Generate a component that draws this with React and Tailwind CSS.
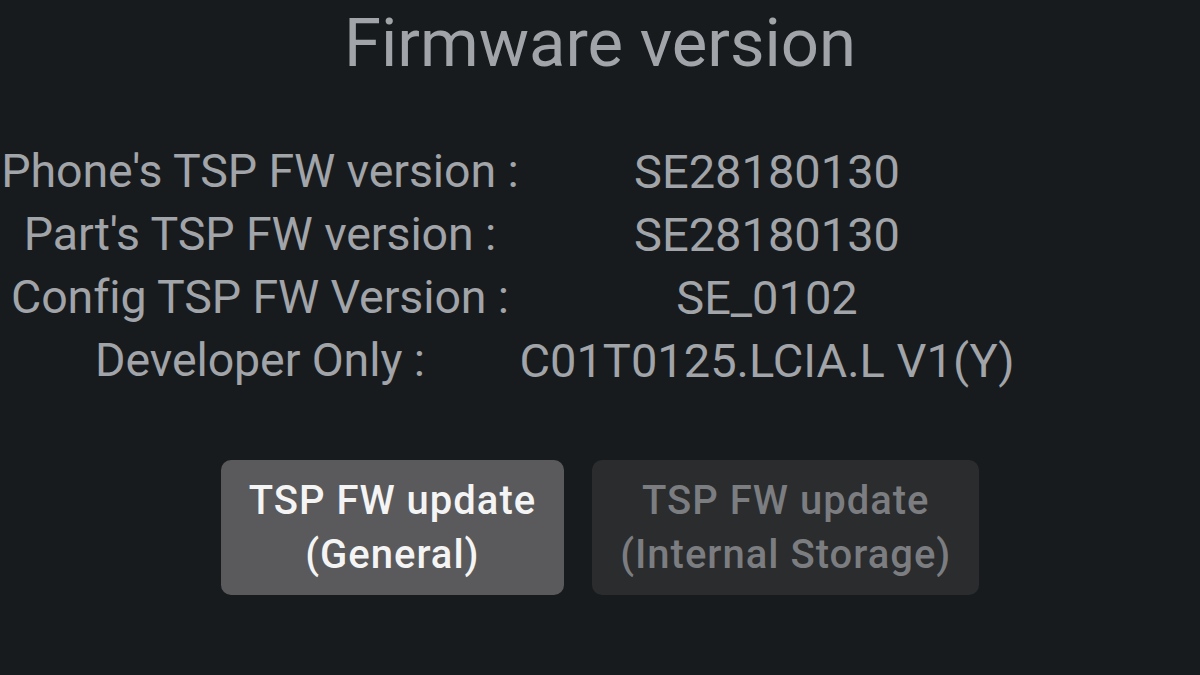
const ROWS = [
  { label: "Phone's TSP FW version :", value: 'SE28180130' },
  { label: "Part's TSP FW version :", value: 'SE28180130' },
  { label: 'Config TSP FW Version :', value: 'SE_0102' },
  { label: 'Developer Only :', value: 'C01T0125.LCIA.L V1(Y)' },
]

export default function App() {
  return (
    <div className="w-[1200px] h-[675px] overflow-hidden bg-[#181b1e] text-[#a1a4a8] font-['Roboto',sans-serif]">
      {/* タイトル */}
      <h1 className="pt-[3px] h-[84px] text-center text-[67px] leading-[80px] font-normal">
        Firmware version
      </h1>

      {/* バージョン一覧 */}
      <div className="mt-[56px] grid grid-cols-[520px_494px]">
        {ROWS.map(row => (
          <div key={row.label} className="contents">
            <div className="flex justify-center h-[63px] text-[46.5px] leading-[63px] tracking-[-0.1px] whitespace-nowrap">
              <span>{row.label}</span>
            </div>
            <div className="flex justify-center h-[63px] text-[47px] leading-[63px] whitespace-nowrap">
              <span>{row.value}</span>
            </div>
          </div>
        ))}
      </div>

      {/* ボタン */}
      <div className="mt-[68px] flex justify-center gap-[28px]">
        <button className="h-[135px] px-[28px] rounded-[10px] bg-[#5a5a5c] text-[#f4f4f4] text-[40px] leading-[54px] tracking-[1px] font-medium">
          TSP FW update
          <br />
          (General)
        </button>
        <button className="h-[135px] px-[28px] rounded-[10px] bg-[#2a2c2e] text-[#7b7d80] text-[40px] leading-[54px] tracking-[1px] font-medium">
          TSP FW update
          <br />
          (Internal Storage)
        </button>
      </div>
    </div>
  )
}
